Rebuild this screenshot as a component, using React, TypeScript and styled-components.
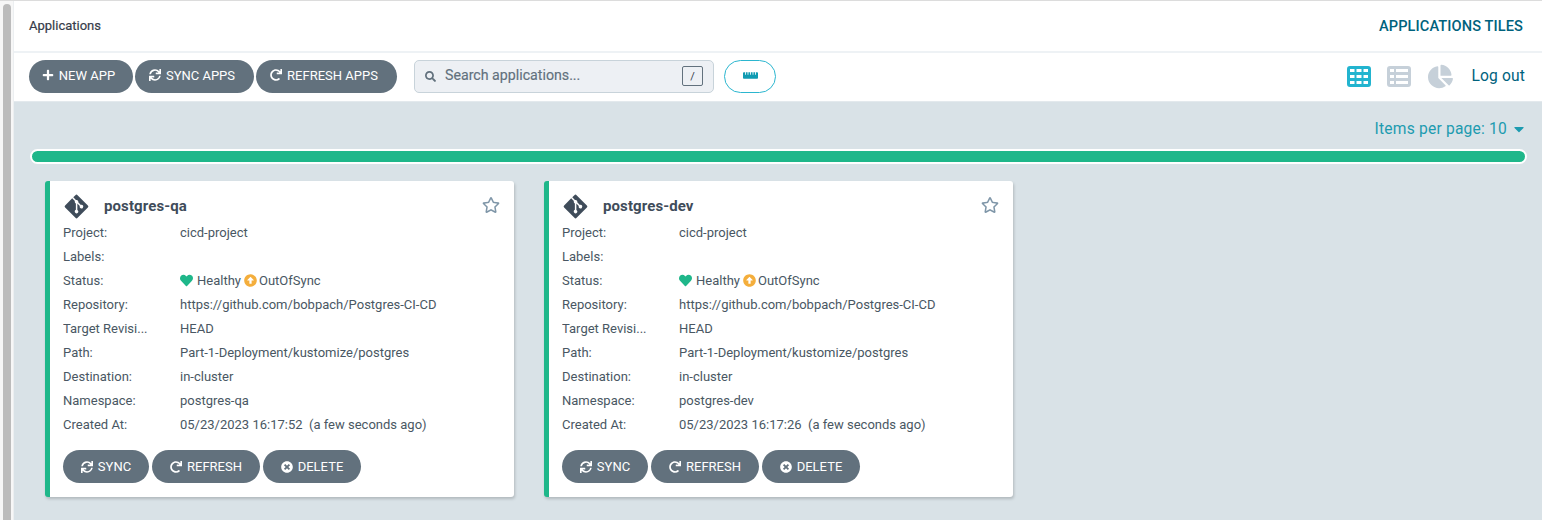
import React from 'react';
import styled, { createGlobalStyle } from 'styled-components';
import {
  FaPlus, FaSync, FaRedo, FaTimesCircle, FaSearch, FaChartPie,
  FaRulerHorizontal, FaRegStar, FaGitAlt, FaHeart, FaArrowAltCircleUp, FaCaretDown,
} from 'react-icons/fa';

const Global = createGlobalStyle`
  html, body { margin: 0; padding: 0; height: 520px; overflow: hidden; background: #fff; }
  * { box-sizing: border-box; }
  body { font-family: Roboto, "Liberation Sans", sans-serif; }
`;

const Shell = styled.div`
  display: flex;
  width: 1542px;
  height: 520px;
  overflow: hidden;
  border-top: 1px solid #dcdcdc;
`;

const Rail = styled.div`
  width: 14px;
  flex: none;
  padding: 3px 3px 0;
  border-right: 1px solid #eceff1;
  background: #f7f7f7;
`;

const RailThumb = styled.div`
  width: 8px;
  height: 100%;
  border-radius: 4px 4px 0 0;
  background: #bcbcbc;
`;

const Main = styled.div`
  flex: 1;
  min-width: 0;
  display: flex;
  flex-direction: column;
`;

const Header = styled.header`
  height: 52px;
  flex: none;
  display: flex;
  align-items: center;
  justify-content: space-between;
  padding: 0 19px 0 15px;
  border-bottom: 2px solid #eef2f5;
  background: #fff;
`;

const Crumb = styled.span`
  margin-bottom: 2px;
  font-size: 13px;
  font-weight: 400;
  color: #363c4a;
  -webkit-text-stroke: 0.2px #363c4a;
`;

const PageTitle = styled.span`
  font-size: 14.6px;
  font-weight: 500;
  letter-spacing: 0.1px;
  color: #00627d;
`;

const Toolbar = styled.div`
  height: 49px;
  flex: none;
  display: flex;
  align-items: center;
  padding: 0 17px 2px 15px;
  border-bottom: 1px solid #e3e9ed;
  background: #fff;
`;

const Pill = styled.button<{ $w: number }>`
  width: ${p => p.$w}px;
  height: 33px;
  flex: none;
  display: inline-flex;
  align-items: center;
  justify-content: center;
  gap: 5px;
  padding: 0;
  border: none;
  border-radius: 17px;
  background: #62717d;
  color: #fff;
  font-family: inherit;
  font-size: 13px;
  font-weight: 400;
  svg { font-size: 12px; }
`;

const ToolPill = styled(Pill)`
  padding: 0 5px 2px 0;
`;

const ButtonRow = styled.div`
  display: flex;
  gap: 2px;
`;

const Search = styled.div`
  width: 300px;
  height: 33px;
  margin-left: 17px;
  flex: none;
  display: flex;
  align-items: center;
  gap: 9px;
  padding: 0 10px 0 10px;
  border: 1px solid #c8d3da;
  border-radius: 5px;
  background: #edf0f4;
  color: #62717d;
  svg { font-size: 11px; color: #62717d; }
`;

const SearchText = styled.span`
  flex: 1;
  margin-bottom: 2px;
  font-size: 14.2px;
  font-weight: 400;
  -webkit-text-stroke: 0.15px #62717d;
`;

const KeyHint = styled.span`
  width: 21px;
  height: 20px;
  display: flex;
  align-items: center;
  justify-content: center;
  border: 1px solid #62717d;
  border-radius: 2px;
  font-size: 11px;
  color: #363c4a;
`;

const Outline = styled.button`
  width: 52px;
  height: 33px;
  margin-left: 10px;
  flex: none;
  display: flex;
  align-items: center;
  justify-content: center;
  padding: 0 0 2px;
  border: 1px solid #2bb6cf;
  border-radius: 17px;
  background: #fff;
  color: #109bb2;
  svg { font-size: 15px; }
`;

const ViewSwitch = styled.div`
  margin-left: auto;
  display: flex;
  align-items: center;
`;

const ViewIcon = styled.span<{ $on?: boolean; $gap: number }>`
  display: flex;
  margin-right: ${p => p.$gap}px;
  color: ${p => (p.$on ? '#22b4cf' : '#c6d0d9')};
  font-size: 25px;
`;

const Logout = styled.span`
  font-size: 15.6px;
  color: #00627d;
  letter-spacing: 0.15px;
`;

const Content = styled.main`
  flex: 1;
  min-height: 0;
  padding: 0 15px 0 16px;
  background: #d9e2e7;
`;

const PerPage = styled.div`
  height: 47px;
  display: flex;
  align-items: center;
  justify-content: flex-end;
  gap: 4px;
  padding: 6px 0 0;
  font-size: 15.6px;
  color: #1d9bb0;
  letter-spacing: 0.2px;
  svg { font-size: 16px; }
`;

const HealthBar = styled.div`
  height: 15px;
  border: 2px solid #fff;
  border-radius: 8px;
  background: #1fb78a;
`;

const Cards = styled.div`
  display: flex;
  gap: 30px;
  margin-top: 17px;
  padding-left: 15px;
`;

const Card = styled.article`
  width: 469px;
  height: 316px;
  flex: none;
  padding: 11px 14px 0 13px;
  border-left: 5px solid #1fb78a;
  border-radius: 3px;
  background: #fff;
  box-shadow: 1px 2px 3px rgba(0, 0, 0, 0.18);
`;

const CardHead = styled.div`
  height: 28px;
  display: flex;
  align-items: center;
  color: #3f4c5a;
`;

const AppName = styled.span`
  margin-left: 14px;
  font-size: 15px;
  font-weight: 700;
  color: #3f4c5a;
  letter-spacing: 0.1px;
`;

const StarWrap = styled.span`
  margin-left: auto;
  margin-bottom: 2px;
  display: flex;
  color: #7f96a8;
  font-size: 18px;
`;

const Row = styled.div`
  height: 24px;
  display: grid;
  grid-template-columns: 117px 1fr;
  align-items: center;
  font-size: 13px;
  color: #495763;
`;

const Key = styled.span`
  white-space: nowrap;
  overflow: hidden;
`;

const Status = styled.span`
  display: flex;
  align-items: center;
  gap: 3px;
`;

const Tint = styled.span<{ $c: string; $mr?: number }>`
  display: flex;
  margin-right: ${p => p.$mr ?? 0}px;
  color: ${p => p.$c};
  font-size: 13px;
`;

const Actions = styled.div`
  display: flex;
  gap: 3px;
  margin-top: 14px;
`;

const Created = styled.span`
  white-space: pre;
`;

const hole = (x: number, y: number, w: number, h: number) =>
  `M${x} ${y}h${w}v${h}h${-w}z`;

const outer = 'M3 0h18a3 3 0 0 1 3 3v15a3 3 0 0 1-3 3H3a3 3 0 0 1-3-3V3a3 3 0 0 1 3-3z';
const rowsY = [3, 9, 15];

const gridPath = outer + rowsY.map(y =>
  hole(3, y, 4.5, 3) + hole(9.5, y, 5, 3) + hole(16.5, y, 4.5, 3)).join('');
const listPath = outer + rowsY.map(y =>
  hole(3, y, 4, 3) + hole(9, y, 12, 3)).join('');

const PanelGlyph = ({ d }: { d: string }) => (
  <svg width="24" height="21" viewBox="0 0 24 21" fill="currentColor">
    <path d={d} fillRule="evenodd" />
  </svg>
);

interface AppInfo { name: string; ns: string; created: string; }

const apps: AppInfo[] = [
  { name: 'postgres-qa', ns: 'postgres-qa', created: '05/23/2023 16:17:52' },
  { name: 'postgres-dev', ns: 'postgres-dev', created: '05/23/2023 16:17:26' },
];

const AppCard = ({ app }: { app: AppInfo }) => (
  <Card>
    <CardHead>
      <FaGitAlt size={27} />
      <AppName>{app.name}</AppName>
      <StarWrap><FaRegStar /></StarWrap>
    </CardHead>
    <div>
      <Row><Key>Project:</Key><span>cicd-project</span></Row>
      <Row><Key>Labels:</Key><span /></Row>
      <Row>
        <Key>Status:</Key>
        <Status>
          <Tint $c="#1fb78a" $mr={1}><FaHeart /></Tint>Healthy
          <Tint $c="#f4ae3c" $mr={-1}><FaArrowAltCircleUp /></Tint>OutOfSync
        </Status>
      </Row>
      <Row><Key>Repository:</Key><span>https://github.com/bobpach/Postgres-CI-CD</span></Row>
      <Row><Key>Target Revisi...</Key><span>HEAD</span></Row>
      <Row><Key>Path:</Key><span>Part-1-Deployment/kustomize/postgres</span></Row>
      <Row><Key>Destination:</Key><span>in-cluster</span></Row>
      <Row><Key>Namespace:</Key><span>{app.ns}</span></Row>
      <Row><Key>Created At:</Key><Created>{app.created}  (a few seconds ago)</Created></Row>
    </div>
    <Actions>
      <Pill $w={86}><FaSync />SYNC</Pill>
      <Pill $w={108}><FaRedo />REFRESH</Pill>
      <Pill $w={98}><FaTimesCircle />DELETE</Pill>
    </Actions>
  </Card>
);

export default function App() {
  return (
    <Shell>
      <Global />
      <Rail><RailThumb /></Rail>
      <Main>
        <Header>
          <Crumb>Applications</Crumb>
          <PageTitle>APPLICATIONS TILES</PageTitle>
        </Header>
        <Toolbar>
          <ButtonRow>
            <ToolPill $w={104}><FaPlus />NEW APP</ToolPill>
            <ToolPill $w={119}><FaSync />SYNC APPS</ToolPill>
            <ToolPill $w={141}><FaRedo />REFRESH APPS</ToolPill>
          </ButtonRow>
          <Search>
            <FaSearch />
            <SearchText>Search applications...</SearchText>
            <KeyHint>/</KeyHint>
          </Search>
          <Outline><FaRulerHorizontal /></Outline>
          <ViewSwitch>
            <ViewIcon $on $gap={16}><PanelGlyph d={gridPath} /></ViewIcon>
            <ViewIcon $gap={17}><PanelGlyph d={listPath} /></ViewIcon>
            <ViewIcon $gap={18}><FaChartPie /></ViewIcon>
            <Logout>Log out</Logout>
          </ViewSwitch>
        </Toolbar>
        <Content>
          <PerPage>Items per page: 10 <FaCaretDown /></PerPage>
          <HealthBar />
          <Cards>
            {apps.map(a => <AppCard key={a.name} app={a} />)}
          </Cards>
        </Content>
      </Main>
    </Shell>
  );
}
